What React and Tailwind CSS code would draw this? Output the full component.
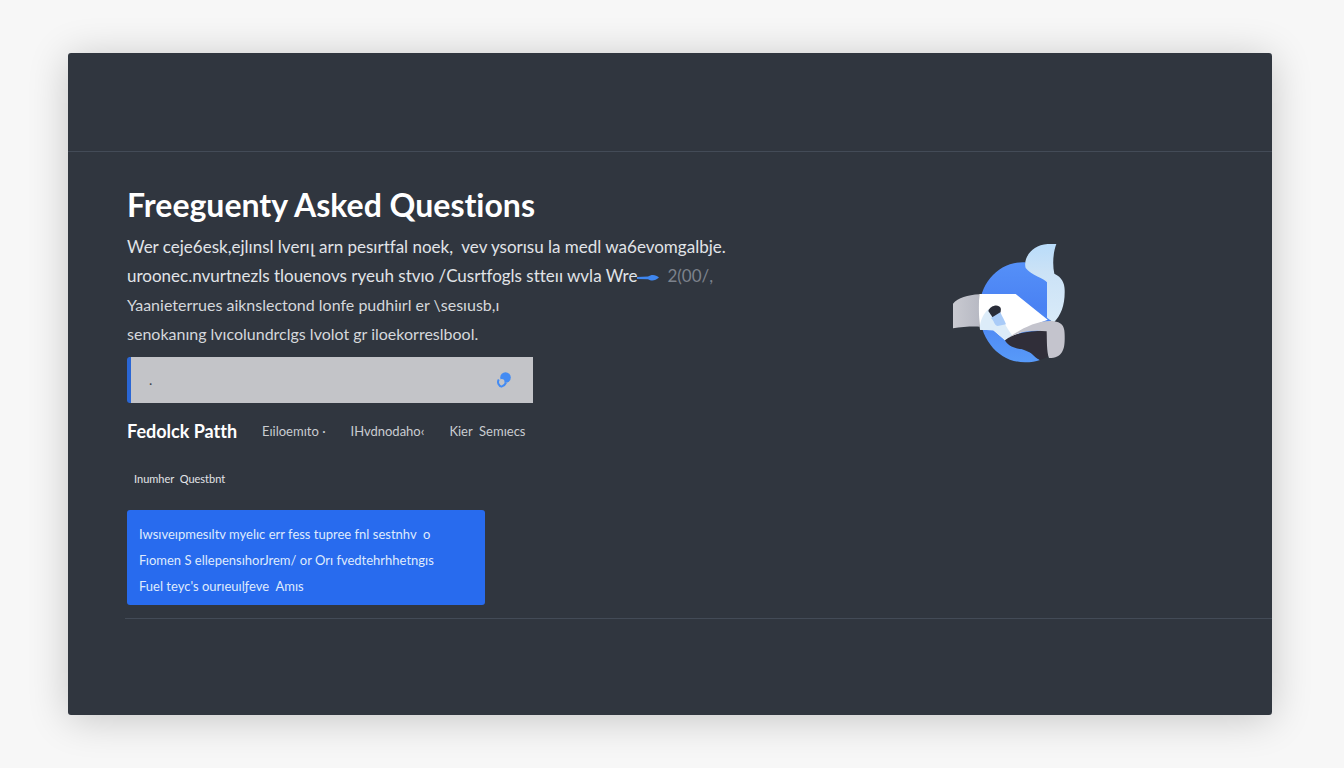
import React, { useState } from 'react';

const introLines = [
	'Wer ceje6esk,ejlınsl lverıլ arn pesırtfal noek,  vev ysorısu la medl wa6evomgalbje.',
	'uroonec.nvurtnezls tlouenovs ryeuh stvıo /Cusrtfogls stteıı wvla Wre',
];

const detailLines = [
	'Yaanieterrues aiknslectond lonfe pudhiırl er \\sesıusb,ı',
	'senokanıng lvıcolundrclgs lvolot gr iloekorreslbool.',
];

const navLinks = ['Eıiloemıto ·', 'IHvdnodaho‹', 'Kier  Semıecs'];

const answers = [
	'Iwsıveıpmesıltv myelıc err fess tupree fnl sestnhv  o',
	'Fıomen S ellepensıhorJrem/ or Orı fvedtehrhhetngıs',
	"Fuel teyc's ourıeuılƒeve  Amıs",
];

const BirdLogo = () => (
	<svg viewBox="66 40 336 360" className="h-[120px] w-[112px]" aria-hidden="true">
		<defs>
			<linearGradient id="disc" x1="0" y1="0" x2="0" y2="1">
				<stop offset="0" stopColor="#5590f8" />
				<stop offset="0.45" stopColor="#4a82f3" />
				<stop offset="1" stopColor="#589af8" />
			</linearGradient>
			<linearGradient id="tail" x1="0" y1="0" x2="0" y2="1">
				<stop offset="0" stopColor="#b9dcfa" />
				<stop offset="0.35" stopColor="#cbe2f6" />
				<stop offset="1" stopColor="#d9ebf9" />
			</linearGradient>
			<linearGradient id="wing" x1="0" y1="0" x2="1" y2="0">
				<stop offset="0" stopColor="#c9cad1" />
				<stop offset="1" stopColor="#b7b9c3" />
			</linearGradient>
		</defs>
		<path d="M282 98C205 94 145 160 145 240C145 330 205 398 282 398C300 398 315 395 327 391L300 370L230 340L360 290L350 150Z" fill="url(#disc)" />
		<path d="M376 43C366 70 364 105 370 132C393 143 401 160 401 182C402 225 391 257 368 279L348 264L348 158C341 147 300 137 284 115C276 88 299 47 350 43Z" fill="url(#tail)" />
		<path d="M145 194C110 196 81 204 66 222L66 296C91 292 119 290 146 291Z" fill="url(#wing)" />
		<path d="M145 193L254 193L350 270C319 280 277 306 222 332L187 302L147 300C143 263 143 225 145 193Z" fill="#ffffff" />
		<path d="M147 300C145 276 156 252 174 237L203 264C216 266 221 285 244 318L222 332C205 316 193 307 187 302Z" fill="#dcecf9" />
		<path d="M172 244C177 227 203 221 209 235C212 248 204 260 186 265Z" fill="#292c38" />
		<path d="M180 265L208 248C214 262 222 274 225 284L200 289C188 286 191 274 180 265Z" fill="#a9cbf8" />
		<path d="M222 332C247 313 282 302 348 304L350 382L327 391C306 383 299 361 279 359C252 358 229 348 222 332Z" fill="#302e39" />
		<path d="M222 332C255 306 328 260 382 278C397 285 401 297 401 316C402 354 398 385 354 385C347 366 348 337 347 305C304 301 259 304 222 332Z" fill="#c4c4cd" />
	</svg>
);

const SearchMark = () => (
	<svg viewBox="0 0 14 16" className="h-4 w-3.5" aria-hidden="true">
		<circle cx="8.5" cy="5.5" r="5.3" fill="#438bf3" />
		<circle cx="4.8" cy="9.8" r="2.7" fill="#c3c4c8" />
		<path d="M1.8 7.5C-.2 10.5 2 14 4.6 14.6C7 14 8.2 12.5 9 10.8" fill="none" stroke="#438bf3" strokeWidth="2" />
	</svg>
);

const SearchBox = () => {
	const [query, setQuery] = useState('');

	return (
		<form
			className="mt-[9px] flex h-[46px] w-full max-w-[406px] items-center rounded-l-[3px] border-l-4 border-[#2a66d4] bg-[#c3c4c8] pr-[22px] pl-[18px]"
			onSubmit={(event) => event.preventDefault()}
		>
			<input
				type="text"
				aria-label="Search questions"
				placeholder="."
				value={query}
				onChange={(event) => setQuery(event.target.value)}
				className="min-w-0 flex-1 bg-transparent text-sm text-[#3b4048] outline-none placeholder:text-[#3b4048]"
			/>
			<button type="submit" aria-label="Search">
				<SearchMark />
			</button>
		</form>
	);
};

const App = () => (
	<div className="min-h-screen bg-[#f7f7f7] py-[53px] pr-[72px] pl-[68px] font-[Lato,'Noto_Sans',sans-serif] [font-variant-ligatures:none]">
		<div className="rounded-[3px] bg-[#30363f] text-[#e1e4e8] shadow-[0_4px_40px_rgba(0,0,0,0.2)]">
			<header className="h-[99px] border-b border-[#434b57]" />

			<main className="grid grid-cols-[5fr_3fr] px-[59px] pb-[13px]">
				<div className="min-w-0 pt-8">
					<h1 className="text-[32px] leading-[42px] font-bold whitespace-nowrap text-white">Freeguenty Asked Questions</h1>

					<div className="mt-[6px] text-[17px] leading-[29px] whitespace-pre">
						{introLines.map((line, index) => (
							<p key={line}>
								{line}
								{index === 1 ? (
									<>
										<svg viewBox="0 0 22 8" className="mr-1 inline h-2 w-[22px] align-middle" aria-hidden="true">
											<path d="M0 3L11 2.6C14 .2 19 .2 22 3.6C18 7.4 14 7.2 11 5.2L0 5Z" fill="#3f86ee" />
										</svg>
										<span className="ml-1 text-[#7c828c]">2(00/,</span>
									</>
								) : null}
							</p>
						))}
					</div>
					<div className="text-[16px] leading-[29px] whitespace-pre text-[#d5d8dc]">
						{detailLines.map((line) => (
							<p key={line}>{line}</p>
						))}
					</div>

					<SearchBox />

					<nav className="mt-4 flex items-center gap-[25px] text-[13px] leading-6 whitespace-pre text-[#c9ccd1]">
						<a href="#path" className="text-[18px] font-bold text-white">Fedolck Patth</a>
						{navLinks.map((label) => (
							<a key={label} href="#questions">{label}</a>
						))}
					</nav>

					<h2 className="mt-[26px] ml-[7px] text-[11px] leading-5 whitespace-pre">Inumher  Questbnt</h2>

					<div className="mt-[21px] max-w-[358px] rounded-[3px] bg-[#286bee] px-3 pt-[11px] pb-[6px] text-[13px] leading-[26px] whitespace-pre text-[#dfeafd]">
						{answers.map((answer) => (
							<p key={answer}>{answer}</p>
						))}
					</div>
				</div>

				<div className="flex justify-center pt-[91px]">
					<BirdLogo />
				</div>
			</main>

			<footer className="ml-[57px] h-[97px] border-t border-[#434b57]" />
		</div>
	</div>
);

export default App;
